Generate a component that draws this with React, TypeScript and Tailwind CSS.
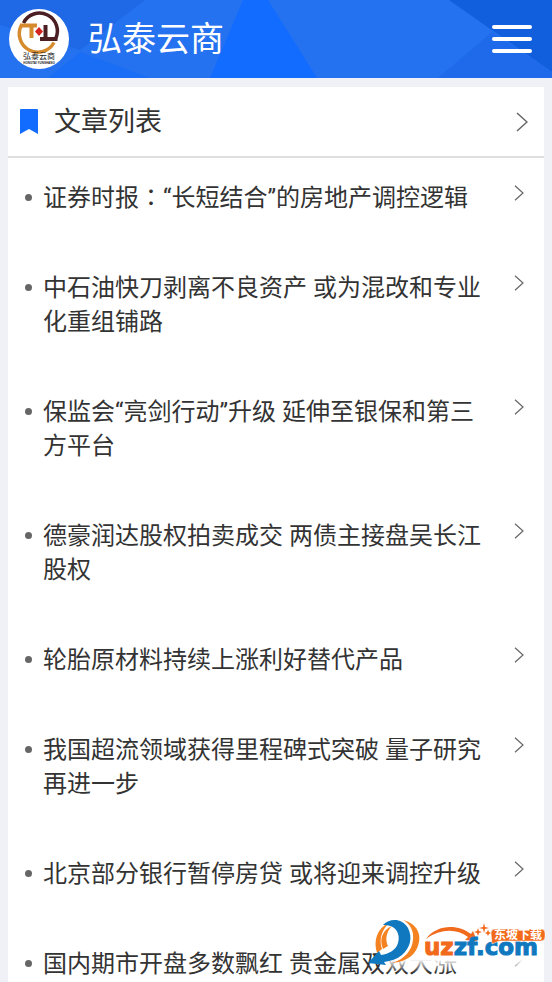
const articles = [
  "证券时报：“长短结合”的房地产调控逻辑",
  "中石油快刀剥离不良资产 或为混改和专业化重组铺路",
  "保监会“亮剑行动”升级 延伸至银保和第三方平台",
  "德豪润达股权拍卖成交 两债主接盘吴长江股权",
  "轮胎原材料持续上涨利好替代产品",
  "我国超流领域获得里程碑式突破 量子研究再进一步",
  "北京部分银行暂停房贷 或将迎来调控升级",
  "国内期市开盘多数飘红 贵金属双双大涨",
];

// The full-width colon is set centred in its cell.
function Title({ text }: { text: string }) {
  const [head, tail] = text.split("：");
  if (tail === undefined) return <>{text}</>;
  return (
    <>
      {head}
      <span lang="zh-TW" className="font-['Noto_Sans_CJK_TC',sans-serif] leading-none">：</span>
      {tail}
    </>
  );
}

function Chevron({ className }: { className: string }) {
  return (
    <svg viewBox="0 0 12 20" fill="none" stroke="#666" className={className} aria-hidden="true">
      <path d="M1 1 L11 10 L1 19" strokeWidth="1.5" />
    </svg>
  );
}

function Logo() {
  return (
    <svg viewBox="0 0 60 60" className="size-15 shrink-0" aria-hidden="true">
      <circle cx="30" cy="30" r="30" fill="#fff" />
      <path d="M14.500 14 A17.500 17.500 0 1 1 46.500 30" fill="none" stroke="#4a1e22" strokeWidth="3.500" />
      <path d="M12.500 16 A18 18 0 0 0 45 33.500" fill="none" stroke="#d68a2e" strokeWidth="3.500" />
      <path d="M11 16.500H28M22.500 17V29" fill="none" stroke="#d68a2e" strokeWidth="4" />
      <path d="M31 30H48.500M36.500 30V16" fill="none" stroke="#4a1e22" strokeWidth="4" />
      <path d="M30 18 L34 22.500 L30 27 L26 22.500Z" fill="#d3231f" />
      <text x="30" y="50" textAnchor="middle" fontSize="8" fill="#222" fontFamily="Noto Sans CJK SC, sans-serif">弘泰云商</text>
      <text x="30" y="55" textAnchor="middle" fontSize="3" fontWeight="700" fill="#222" fontFamily="Liberation Sans, sans-serif">HONGTAI YUNSHANG</text>
    </svg>
  );
}

function Watermark() {
  return (
    <svg viewBox="0 0 188 66" className="pointer-events-none absolute right-0 bottom-0 h-[66px] w-[188px]" aria-hidden="true">
      <defs>
        <linearGradient id="fade" x1="0" y1="0" x2="0" y2="1">
          <stop offset="0" stopColor="#fff" />
          <stop offset="0.65" stopColor="#fff" />
          <stop offset="1" stopColor="#fff" stopOpacity="0" />
        </linearGradient>
      </defs>
      <rect x="16" y="20" width="164" height="36" fill="url(#fade)" />
      <path d="M25 7 C13 12 9 25 13 37 L18 33 C15 24 17 15 25 7Z" fill="#f58220" />
      <path d="M28 10 C18 14 15 24 19 33 L24 30 C21 24 22 16 28 10Z" fill="#f58220" />
      <path d="M39 4 C52 7 57 17 55 26 C53 38 43 46 28 47 C41 43 48 34 49 24 C50 16 47 8 39 4Z" fill="#f58220" />
      <path d="M19 9 C26 2 38 2 44 12 C49 22 46 32 38 39 C33 43 27 45 20 46 L22 49 L4 47 L15 35 L17 39 C25 38 32 34 34 27 C37 17 31 8 19 9Z" fill="#0f78be" />
      <path d="M62 23 C73 8 94 8 107 18 L109 15 L113 25 L101 24 L104 21 C92 12 76 13 62 23Z" fill="#f26a1b" />
      <path d="M120 7L121 11L125 12L121 13L120 17L119 13L115 12L119 11Z M114 12L115 15L118 16L115 17L114 20L113 17L110 16L113 15Z M124 14L125 16L127 17L125 18L124 20L123 18L121 17L123 16Z" fill="#f26a1b" />
      <text x="60" y="39" fontSize="23" fontWeight="700" fontFamily="DejaVu Sans, sans-serif" strokeWidth="1">
        <tspan fill="#f26a1b" stroke="#f26a1b">uz</tspan>
        <tspan fill="#0f78be" stroke="#0f78be">zf.com</tspan>
      </text>
      <path d="M131 13H177Q181 13 181 17V21Q181 25 177 25H135L128 28L127 17Q127 13 131 13Z" fill="#f26a1b" stroke="#fff" strokeWidth="0.500" />
      <text x="130" y="23" fontSize="12" fontWeight="700" fill="#fff" fontFamily="Noto Sans CJK SC, sans-serif">东坡下载</text>
    </svg>
  );
}

export default function App() {
  return (
    <div className="relative h-screen overflow-hidden bg-[#f0f1f6] font-[Roboto,'Noto_Sans_CJK_SC',sans-serif] text-[#333]">
      <header className="relative flex h-[78px] items-center justify-between bg-[#2472f0] pr-5 pl-[9px]">
        <svg viewBox="0 0 552 78" preserveAspectRatio="none" className="absolute inset-0 size-full" aria-hidden="true">
          <path d="M0 25L80 50L145 0H0Z" fill="#1f69e6" />
          <path d="M80 52L150 78H48Z" fill="#1a6df5" />
          <path d="M243 0H268L317 78H210Z" fill="#126cff" />
          <path d="M449 0H552V72Z" fill="#125fdd" />
          <path d="M492 32L552 72V78H438Z" fill="#1f6aea" />
        </svg>
        <div className="relative flex items-center gap-[19px]">
          <Logo />
          <h1 className="text-[34px] leading-none text-white">弘泰云商</h1>
        </div>
        <button type="button" aria-label="菜单" className="relative flex w-10 flex-col gap-2">
          <span className="h-1 rounded-full bg-white" />
          <span className="h-1 rounded-full bg-white" />
          <span className="h-1 rounded-full bg-white" />
        </button>
      </header>
      <main className="mx-2 mt-[9px] bg-white">
        <a href="#list" className="flex h-[71px] items-center border-b-2 border-[#dfdfdf] pr-4 pl-3">
          <svg viewBox="0 0 18 25" className="h-[25px] w-[18px]" aria-hidden="true">
            <path d="M0 1Q0 0 1 0H17Q18 0 18 1V25L9 20L0 25Z" fill="#126cff" />
          </svg>
          <h2 className="ml-4 flex-1 pt-[2px] text-[27px] leading-none">文章列表</h2>
          <Chevron className="h-5 w-3" />
        </a>
        <ul>
          {articles.map((title) => (
            <li key={title}>
              <a href="#article" className="flex items-start pt-[23px] pr-5 pb-[33px] pl-[17px]">
                <span className="mt-[13px] size-[7px] shrink-0 rounded-full bg-[#666]" />
                <span className="mr-6 ml-[11px] flex-1 text-2xl leading-[34px]">
                  <Title text={title} />
                </span>
                <Chevron className="mt-1 h-4 w-[10px]" />
              </a>
            </li>
          ))}
        </ul>
      </main>
      <Watermark />
    </div>
  );
}
